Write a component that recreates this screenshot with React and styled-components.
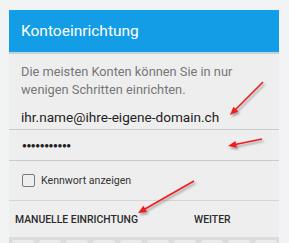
import styled, { createGlobalStyle } from 'styled-components';

const GlobalStyle = createGlobalStyle`
  body {
    margin: 0;
    background: #f2f3f5;
    font-family: Roboto, "Noto Sans", sans-serif;
  }
`;

const Screen = styled.div`
  position: relative;
  width: 289px;
  height: 243px;
  overflow: hidden;
  padding-top: 10px;
  box-sizing: border-box;
`;

const Panel = styled.div`
  margin-left: 9px;
  width: 270px;
  background: #eeeeee;
`;

const Header = styled.div`
  height: 42px;
  background: #129de6;
  color: #ffffff;
  font-size: 15.5px;
  display: flex;
  align-items: center;
  padding-left: 12px;
  box-shadow: 0 2px 0 #bdd3e0;
  position: relative;
`;

const Intro = styled.p`
  margin: 0;
  padding: 11px 12px 0;
  font-size: 12.8px;
  line-height: 18px;
  color: #777777;
  white-space: nowrap;
`;

const Field = styled.div`
  height: 31px;
  padding: ${(p) => (p.$dots ? '0 13px' : '6px 12px 0')};
  box-sizing: border-box;
  border-bottom: 1px solid #c9c9c9;
  font-size: ${(p) => (p.$dots ? '8px' : '13.6px')};
  letter-spacing: ${(p) => (p.$dots ? '-0.4px' : '0')};
  color: #222222;
  display: flex;
  align-items: center;
`;

const CheckRow = styled.label`
  height: 39px;
  display: flex;
  align-items: center;
  gap: 6px;
  padding-left: 13px;
  border-bottom: 1px solid #d6d6d6;
  font-size: 10.6px;
  color: #333333;
`;

const Box = styled.span`
  width: 11px;
  height: 11px;
  border: 1.5px solid #7a7a7a;
  border-radius: 2px;
`;

const ButtonBar = styled.div`
  height: 36px;
  display: flex;
  align-items: center;
`;

const TextButton = styled.span`
  font-size: 10.4px;
  font-weight: 500;
  color: #2b2b2b;
  padding-left: ${(p) => p.$left}px;
`;

const Keyboard = styled.div`
  height: 10px;
  background: #dcdcdc;
  display: flex;
  gap: 5px;
  padding: 3px 0 0 3px;
`;

const Key = styled.span`
  width: 22px;
  height: 10px;
  background: #ebebeb;
  border-radius: 3px 3px 0 0;
`;

const Arrows = styled.svg`
  position: absolute;
  left: 0;
  top: 0;
  pointer-events: none;
`;

const Arrow = ({ x1, y1, x2, y2 }) => {
  const a = Math.atan2(y2 - y1, x2 - x1);
  const l = 9;
  const w = 0.4;
  const p1 = [x2 - l * Math.cos(a - w), y2 - l * Math.sin(a - w)];
  const p2 = [x2 - l * Math.cos(a + w), y2 - l * Math.sin(a + w)];
  const bx = x2 - 6 * Math.cos(a);
  const by = y2 - 6 * Math.sin(a);
  return (
    <g>
      <line x1={x1} y1={y1} x2={bx} y2={by} stroke="#ee1c1c" strokeWidth="1.6" />
      <polygon points={`${x2},${y2} ${p1.join(',')} ${p2.join(',')}`} fill="#ee1c1c" />
    </g>
  );
};

export default function App() {
  return (
    <Screen>
      <GlobalStyle />
      <Panel>
        <Header>Kontoeinrichtung</Header>
        <Intro>
          Die meisten Konten können Sie in nur
          <br />
          wenigen Schritten einrichten.
        </Intro>
        <Field>ihr.name@ihre-eigene-domain.ch</Field>
        <Field $dots>●●●●●●●●●●●</Field>
        <CheckRow>
          <Box />
          Kennwort anzeigen
        </CheckRow>
        <ButtonBar>
          <TextButton $left={6}>MANUELLE EINRICHTUNG</TextButton>
          <TextButton $left={56}>WEITER</TextButton>
        </ButtonBar>
        <Keyboard>
          {Array.from({ length: 10 }, (_, i) => (
            <Key key={i} />
          ))}
        </Keyboard>
      </Panel>
      <Arrows width="289" height="243" viewBox="0 0 289 243">
        <defs>
          <filter id="sh" x="-20%" y="-20%" width="140%" height="140%">
            <feDropShadow dx="1.5" dy="2" stdDeviation="1.2" floodColor="#000" floodOpacity="0.35" />
          </filter>
        </defs>
        <g filter="url(#sh)">
          <Arrow x1={263} y1={82} x2={230} y2={115} />
          <Arrow x1={262} y1={139} x2={228} y2={146} />
          <Arrow x1={194} y1={181} x2={138} y2={213} />
        </g>
      </Arrows>
    </Screen>
  );
}
